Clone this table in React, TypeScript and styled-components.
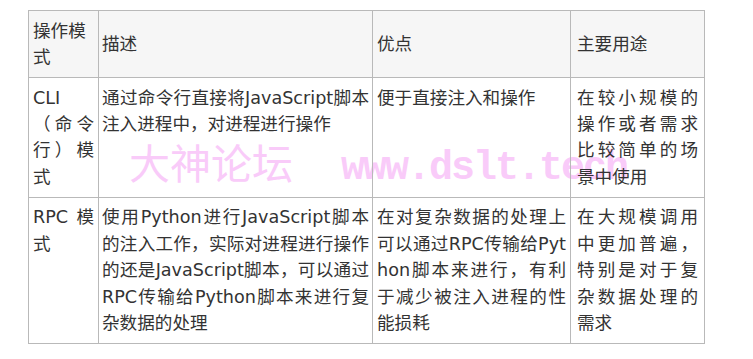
import styled, { createGlobalStyle } from "styled-components";

const GlobalStyle = createGlobalStyle`
  html, body {
    margin: 0;
    background: #ffffff;
  }
`;

type Column = { title: string; width: number; pad: number };

const columns: Column[] = [
  { title: "操作模式", width: 70, pad: 4 },
  { title: "描述", width: 274, pad: 3 },
  { title: "优点", width: 198, pad: 4 },
  { title: "主要用途", width: 134, pad: 6 },
];

const rows: string[][] = [
  [
    "CLI（命令行）模式",
    "通过命令行直接将JavaScript脚本注入进程中，对进程进行操作",
    "便于直接注入和操作",
    "在较小规模的操作或者需求比较简单的场景中使用",
  ],
  [
    "RPC 模式",
    "使用Python进行JavaScript脚本的注入工作，实际对进程进行操作的还是JavaScript脚本，可以通过RPC传输给Python脚本来进行复杂数据的处理",
    "在对复杂数据的处理上可以通过RPC传输给Python脚本来进行，有利于减少被注入进程的性能损耗",
    "在大规模调用中更加普遍，特别是对于复杂数据处理的需求",
  ],
];

export default function App() {
  return (
    <Page>
      <GlobalStyle />
      <Watermark>
        <WatermarkCn>大神论坛</WatermarkCn>
        <WatermarkEn>www.dslt.tech</WatermarkEn>
      </Watermark>
      <Table>
        <colgroup>
          {columns.map((c) => (
            <col key={c.title} style={{ width: c.width }} />
          ))}
        </colgroup>
        <thead>
          <tr>
            {columns.map((c) => (
              <HeadCell key={c.title} $pad={c.pad}>
                {c.title}
              </HeadCell>
            ))}
          </tr>
        </thead>
        <tbody>
          {rows.map((row) => (
            <tr key={row[0]}>
              {row.map((text, i) => (
                <Cell key={i} $pad={columns[i].pad}>
                  {text}
                </Cell>
              ))}
            </tr>
          ))}
        </tbody>
      </Table>
    </Page>
  );
}

//>>>>StyledComponents<<<<\\

const Page = styled.div`
  position: relative;
  width: 753px;
  height: 359px;
  box-sizing: border-box;
  padding: 10px 0 0 28px;
  overflow: hidden;
`;

const Watermark = styled.div`
  position: absolute;
  left: 129px;
  top: 141px;
  display: flex;
  align-items: baseline;
  gap: 48px;
  color: #f9cbf9;
  pointer-events: none;
  white-space: nowrap;
`;

const WatermarkCn = styled.span`
  font-family: "Noto Sans CJK SC", sans-serif;
  font-size: 41px;
  line-height: 1;
`;

const WatermarkEn = styled.span`
  font-family: "Liberation Mono", monospace;
  font-size: 40px;
  font-weight: bold;
  letter-spacing: -2px;
  line-height: 1;
`;

const Table = styled.table`
  position: relative;
  width: 677px;
  table-layout: fixed;
  border-collapse: collapse;
  font-family: "DejaVu Sans", "Noto Sans CJK SC", sans-serif;
  font-size: 17.6px;
  line-height: 26.4px;
  color: #333333;
`;

const Cell = styled.td<{ $pad: number }>`
  border: 1px solid #b9b9b9;
  padding: 6.6px ${(p) => p.$pad}px;
  vertical-align: top;
  text-align: justify;
  word-break: break-all;
`;

const HeadCell = styled.th<{ $pad: number }>`
  border: 1px solid #b9b9b9;
  padding: 6.6px ${(p) => p.$pad}px;
  background: rgba(240, 240, 240, 0.6);
  font-weight: normal;
  vertical-align: middle;
  text-align: left;
  word-break: break-all;
`;
